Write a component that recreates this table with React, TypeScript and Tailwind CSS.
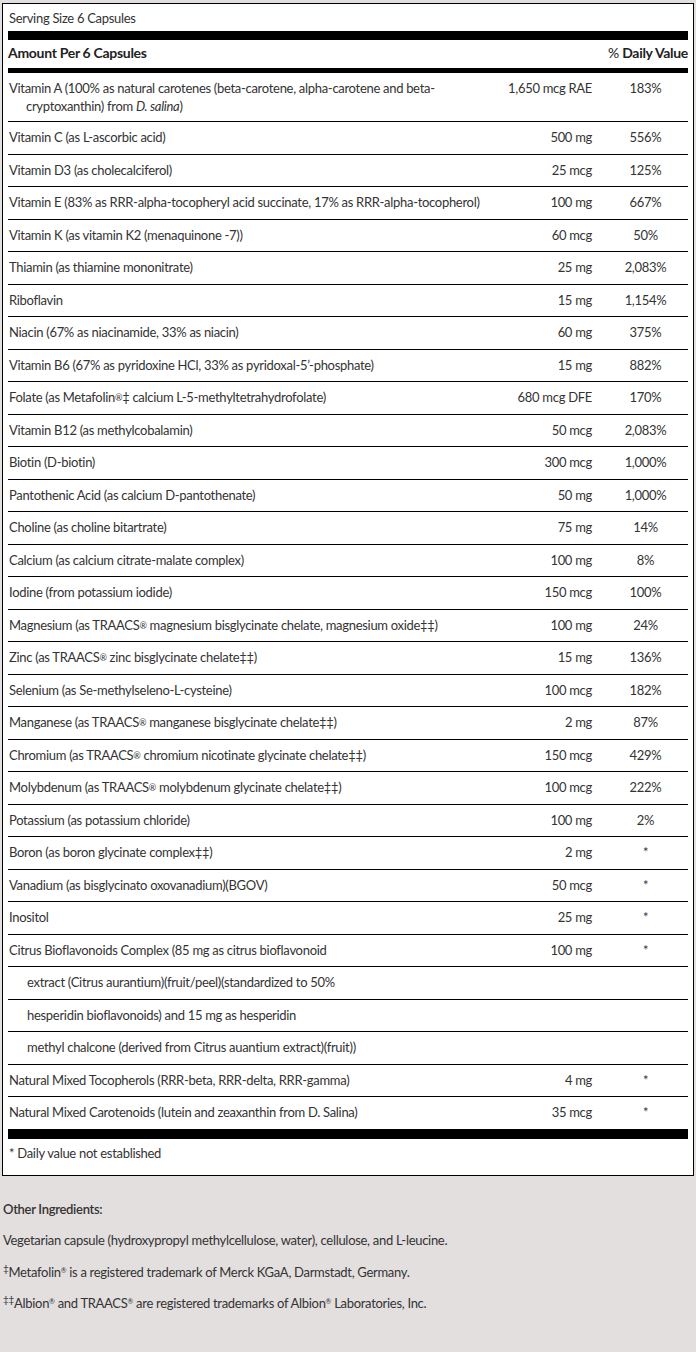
import type { ReactNode } from "react";

interface Nutrient {
  name: ReactNode;
  amount?: string;
  dv?: string;
  indent?: boolean;
}

const R = () => <sup className="text-[9px] relative -top-[1px]">®</sup>;

const nutrients: Nutrient[] = [
  {
    name: (
      <>
        Vitamin A (100% as natural carotenes (beta-carotene, alpha-carotene and beta-cryptoxanthin) from <i>D. salina</i>)
      </>
    ),
    amount: "1,650 mcg RAE",
    dv: "183%",
  },
  { name: "Vitamin C (as L-ascorbic acid)", amount: "500 mg", dv: "556%" },
  { name: "Vitamin D3 (as cholecalciferol)", amount: "25 mcg", dv: "125%" },
  {
    name: "Vitamin E (83% as RRR-alpha-tocopheryl acid succinate, 17% as RRR-alpha-tocopherol)",
    amount: "100 mg",
    dv: "667%",
  },
  { name: "Vitamin K (as vitamin K2 (menaquinone -7))", amount: "60 mcg", dv: "50%" },
  { name: "Thiamin (as thiamine mononitrate)", amount: "25 mg", dv: "2,083%" },
  { name: "Riboflavin", amount: "15 mg", dv: "1,154%" },
  { name: "Niacin (67% as niacinamide, 33% as niacin)", amount: "60 mg", dv: "375%" },
  { name: "Vitamin B6 (67% as pyridoxine HCl, 33% as pyridoxal-5’-phosphate)", amount: "15 mg", dv: "882%" },
  {
    name: (
      <>
        Folate (as Metafolin<R />‡ calcium L-5-methyltetrahydrofolate)
      </>
    ),
    amount: "680 mcg DFE",
    dv: "170%",
  },
  { name: "Vitamin B12 (as methylcobalamin)", amount: "50 mcg", dv: "2,083%" },
  { name: "Biotin (D-biotin)", amount: "300 mcg", dv: "1,000%" },
  { name: "Pantothenic Acid (as calcium D-pantothenate)", amount: "50 mg", dv: "1,000%" },
  { name: "Choline (as choline bitartrate)", amount: "75 mg", dv: "14%" },
  { name: "Calcium (as calcium citrate-malate complex)", amount: "100 mg", dv: "8%" },
  { name: "Iodine (from potassium iodide)", amount: "150 mcg", dv: "100%" },
  {
    name: (
      <>
        Magnesium (as TRAACS<R /> magnesium bisglycinate chelate, magnesium oxide‡‡)
      </>
    ),
    amount: "100 mg",
    dv: "24%",
  },
  {
    name: (
      <>
        Zinc (as TRAACS<R /> zinc bisglycinate chelate‡‡)
      </>
    ),
    amount: "15 mg",
    dv: "136%",
  },
  { name: "Selenium (as Se-methylseleno-L-cysteine)", amount: "100 mcg", dv: "182%" },
  {
    name: (
      <>
        Manganese (as TRAACS<R /> manganese bisglycinate chelate‡‡)
      </>
    ),
    amount: "2 mg",
    dv: "87%",
  },
  {
    name: (
      <>
        Chromium (as TRAACS<R /> chromium nicotinate glycinate chelate‡‡)
      </>
    ),
    amount: "150 mcg",
    dv: "429%",
  },
  {
    name: (
      <>
        Molybdenum (as TRAACS<R /> molybdenum glycinate chelate‡‡)
      </>
    ),
    amount: "100 mcg",
    dv: "222%",
  },
  { name: "Potassium (as potassium chloride)", amount: "100 mg", dv: "2%" },
  { name: "Boron (as boron glycinate complex‡‡)", amount: "2 mg", dv: "*" },
  { name: "Vanadium (as bisglycinato oxovanadium)(BGOV)", amount: "50 mcg", dv: "*" },
  { name: "Inositol", amount: "25 mg", dv: "*" },
  { name: "Citrus Bioflavonoids Complex (85 mg as citrus bioflavonoid", amount: "100 mg", dv: "*" },
  { name: "extract (Citrus aurantium)(fruit/peel)(standardized to 50%", indent: true },
  { name: "hesperidin bioflavonoids) and 15 mg as hesperidin", indent: true },
  { name: "methyl chalcone (derived from Citrus auantium extract)(fruit))", indent: true },
  { name: "Natural Mixed Tocopherols (RRR-beta, RRR-delta, RRR-gamma)", amount: "4 mg", dv: "*" },
  { name: "Natural Mixed Carotenoids (lutein and zeaxanthin from D. Salina)", amount: "35 mcg", dv: "*" },
];

const SupplementFacts = () => {
  return (
    <div className="min-h-screen bg-[#e3dfdf] px-[2px] pt-[3px] font-['Lato',sans-serif] text-[13px] tracking-[-0.3px] leading-[18px] text-[#333]">
      <div className="border border-black bg-white px-[5px] pt-[5px] pb-[13px]">
        <div className="px-[1px]">Serving Size 6 Capsules</div>
        <div className="mt-[4px] h-[9px] bg-black" />
        <div className="flex items-center justify-between pt-[4px] pb-[6px] text-[14px] text-[#222]">
          <span className="font-bold">Amount Per 6 Capsules</span>
          <span>
            % <span className="font-bold">Daily Value</span>
          </span>
        </div>
        <div className="h-[5px] bg-black" />

        {nutrients.map((n, idx) => {
          const last = idx === nutrients.length - 1;
          return (
            <div
              key={idx}
              className={`flex items-start pt-[6px] ${idx === 0 ? "pb-[6px]" : "pb-[7.5px]"} ${
                last ? "" : "border-b border-black"
              }`}
            >
              <div
                className={`min-w-0 flex-1 pr-[6px] ${
                  n.indent ? "pl-[19px]" : "pl-[18px] -indent-[17px]"
                }`}
              >
                {n.name}
              </div>
              <div className="w-[100px] shrink-0 whitespace-nowrap pr-[11px] text-right">{n.amount}</div>
              <div className="w-[85px] shrink-0 text-center">{n.dv}</div>
            </div>
          );
        })}

        <div className="h-[10px] bg-black" />
        <div className="px-[1px] pt-[5px]">* Daily value not established</div>
      </div>

      <div className="px-[1px] pt-[24px] pb-[40px]">
        <p className="font-semibold">Other Ingredients:</p>
        <p className="mt-[13px]">
          Vegetarian capsule (hydroxypropyl methylcellulose, water), cellulose, and L-leucine.
        </p>
        <p className="mt-[14px]">
          <sup className="text-[10px]">‡</sup>Metafolin<sup className="text-[7px]">®</sup> is a registered trademark of
          Merck KGaA, Darmstadt, Germany.
        </p>
        <p className="mt-[13px]">
          <sup className="text-[10px]">‡‡</sup>Albion<sup className="text-[7px]">®</sup> and TRAACS
          <sup className="text-[7px]">®</sup> are registered trademarks of Albion<sup className="text-[7px]">®</sup>{" "}
          Laboratories, Inc.
        </p>
      </div>
    </div>
  );
};

export default function App() {
  return <SupplementFacts />;
}
